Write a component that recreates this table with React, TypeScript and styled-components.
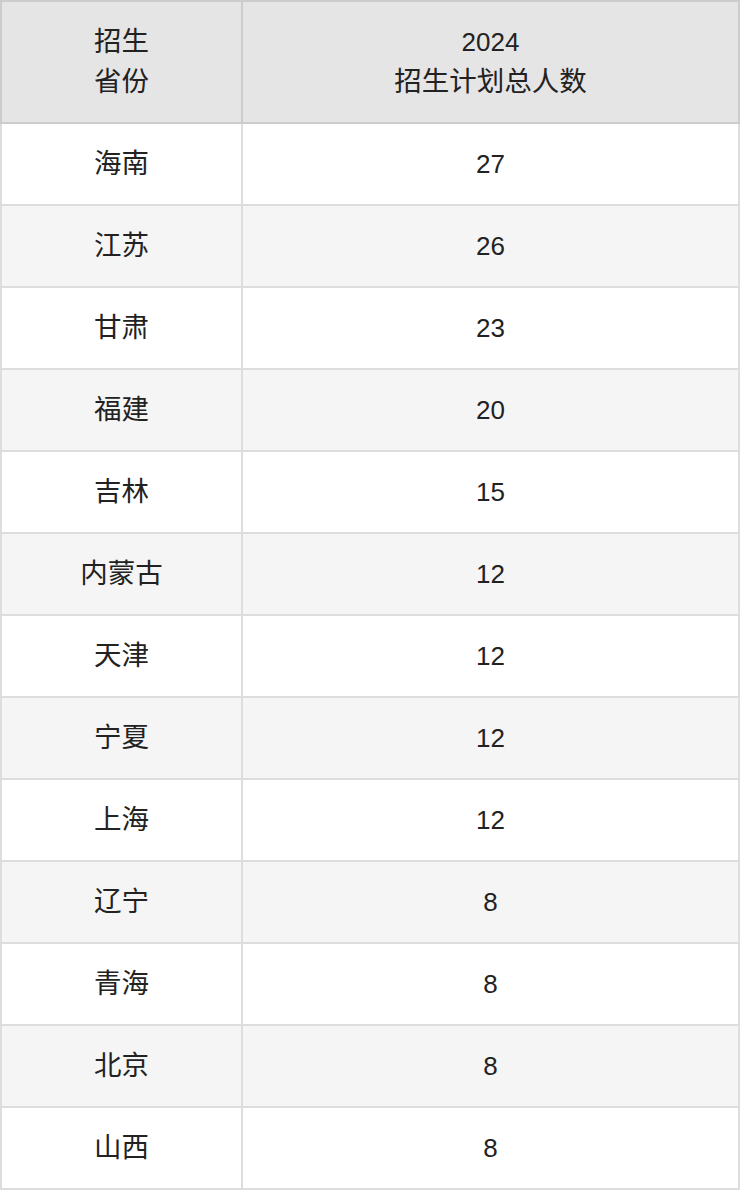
import styled, { createGlobalStyle } from "styled-components";

const GlobalStyle = createGlobalStyle`
  html, body {
    margin: 0;
    padding: 0;
    background: #fff;
  }
  body {
    font-family: "Liberation Sans", "Noto Sans CJK SC", sans-serif;
    color: #222;
  }
`;

const StyledTable = styled.table`
  width: 740px;
  border-collapse: collapse;
  table-layout: fixed;
  font-size: 26px;
  line-height: 40px;
  text-align: center;
`;

const StyledHeadCell = styled.th`
  background: #e5e5e5;
  border: 2px solid #ccc;
  font-weight: 400;
  height: 120px;
  padding: 0;
`;

const StyledRow = styled.tr<{ $striped: boolean }>`
  background: ${(p) => (p.$striped ? "#f5f5f5" : "#fff")};
`;

const StyledCell = styled.td`
  border: 2px solid #ddd;
  height: 80px;
  padding: 0;
`;

// the CJK glyphs in the reference run a little larger than the digits
const StyledLine = styled.span<{ $cjk?: boolean }>`
  display: block;
  font-size: ${(p) => (p.$cjk ? "27.5px" : "26px")};
`;

const rows: [string, number][] = [
  ["海南", 27],
  ["江苏", 26],
  ["甘肃", 23],
  ["福建", 20],
  ["吉林", 15],
  ["内蒙古", 12],
  ["天津", 12],
  ["宁夏", 12],
  ["上海", 12],
  ["辽宁", 8],
  ["青海", 8],
  ["北京", 8],
  ["山西", 8],
];

function App() {
  return (
    <>
      <GlobalStyle />
      <StyledTable>
        <colgroup>
          <col style={{ width: 241 }} />
          <col />
        </colgroup>
        <thead>
          <tr>
            <StyledHeadCell>
              <StyledLine $cjk>招生</StyledLine>
              <StyledLine $cjk>省份</StyledLine>
            </StyledHeadCell>
            <StyledHeadCell>
              <StyledLine>2024</StyledLine>
              <StyledLine $cjk>招生计划总人数</StyledLine>
            </StyledHeadCell>
          </tr>
        </thead>
        <tbody>
          {rows.map(([province, count], i) => (
            <StyledRow key={province} $striped={i % 2 === 1}>
              <StyledCell>
                <StyledLine $cjk>{province}</StyledLine>
              </StyledCell>
              <StyledCell>
                <StyledLine>{count}</StyledLine>
              </StyledCell>
            </StyledRow>
          ))}
        </tbody>
      </StyledTable>
    </>
  );
}

export default App;
